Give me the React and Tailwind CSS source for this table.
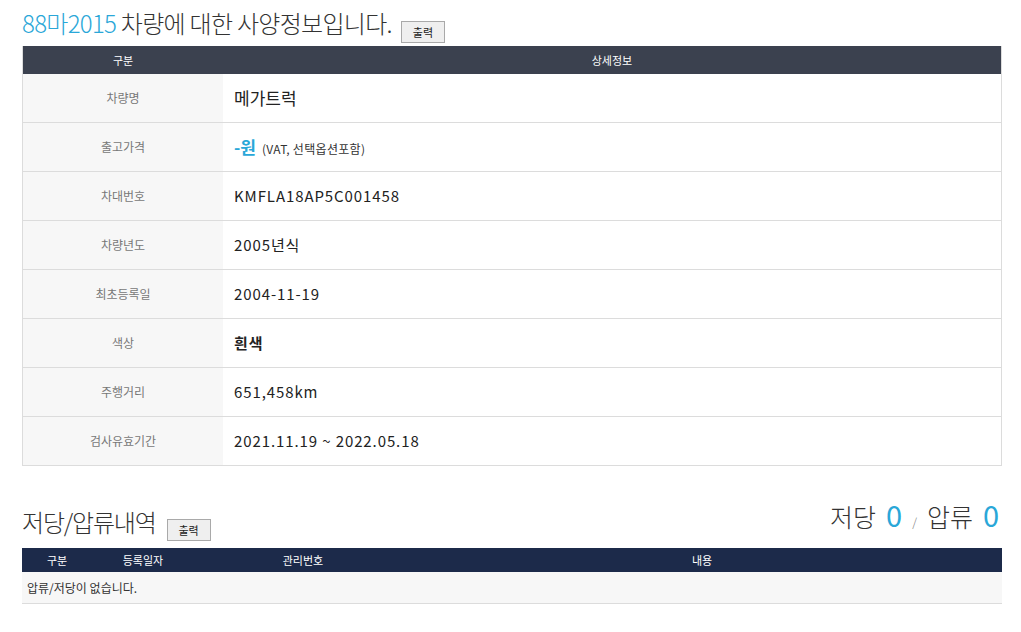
import React from "react";

const rows = [
  { label: "차량명", value: <span className="text-[17px] tracking-normal">메가트럭</span> },
  {
    label: "출고가격",
    value: (
      <span className="flex items-baseline tracking-normal">
        <span className="text-[17px] text-[#2aa7d8] font-bold">-원</span>
        <span className="ml-[6px] text-[12px] text-[#333] tracking-[0.3px]">(VAT, 선택옵션포함)</span>
      </span>
    ),
  },
  { label: "차대번호", value: "KMFLA18AP5C001458" },
  { label: "차량년도", value: "2005년식" },
  { label: "최초등록일", value: "2004-11-19" },
  { label: "색상", value: <span className="font-bold">흰색</span> },
  { label: "주행거리", value: "651,458km" },
  { label: "검사유효기간", value: "2021.11.19 ~ 2022.05.18" },
];

function PrintButton() {
  return (
    <button className="h-[22px] w-[44px] border border-[#a9a9a9] bg-[#efefef] text-[11px] text-[#222] leading-none">
      출력
    </button>
  );
}

export default function App() {
  return (
    <div
      className="w-[1021px] h-[632px] bg-white text-[#333] overflow-hidden"
      style={{ fontFamily: '"Noto Sans CJK KR", "Noto Sans", sans-serif' }}
    >
      <div className="pl-[22px] pr-[19px] pt-[5px]">
        <div className="flex items-end h-[36px]">
          <h1 className="text-[24px] font-light tracking-[-0.7px] leading-[36px] text-[#333]">
            <span className="text-[#2aa7d8]">88마2015</span> 차량에 대한 사양정보입니다.
          </h1>
          <div className="ml-[9px] mb-[-2px]">
            <PrintButton />
          </div>
        </div>

        <div className="mt-[5px] border-l border-r border-[#dcdcdc]">
          <div className="flex h-[28px] bg-[#3b414f] text-white text-[11px] items-center">
            <div className="w-[200px] text-center">구분</div>
            <div className="flex-1 text-center">상세정보</div>
          </div>
          {rows.map((r) => (
            <div key={r.label} className="flex h-[49px] border-b border-[#dcdcdc]">
              <div className="w-[200px] bg-[#f7f7f7] flex items-center justify-center text-[12px] text-[#777]">
                {r.label}
              </div>
              <div className="flex-1 flex items-center pl-[11px] text-[15px] text-[#222] tracking-[0.9px]">
                {r.value}
              </div>
            </div>
          ))}
        </div>

        <div className="mt-[34px] flex items-end justify-between h-[40px]">
          <div className="flex items-end">
            <h2 className="text-[24px] font-light tracking-[-1.2px] leading-[36px] text-[#333]">
              저당/압류내역
            </h2>
            <div className="ml-[11px] mb-[-1px]">
              <PrintButton />
            </div>
          </div>
          <div className="flex items-baseline text-[25px] font-light leading-[36px] text-[#333] pr-[3px]">
            <span>저당</span>
            <span className="ml-[10px] text-[29px] text-[#2aa7d8] font-normal">0</span>
            <span className="mx-[10px] text-[12px] text-[#777]">/</span>
            <span>압류</span>
            <span className="ml-[10px] text-[29px] text-[#2aa7d8] font-normal">0</span>
          </div>
        </div>

        <div className="mt-[8px]">
          <div className="grid grid-cols-[70px_102px_218px_1fr] h-[24px] bg-[#1c2a4a] text-white text-[11px] items-center">
            <div className="text-center">구분</div>
            <div className="text-center">등록일자</div>
            <div className="text-center">관리번호</div>
            <div className="text-center pr-[10px]">내용</div>
          </div>
          <div className="h-[32px] bg-[#f7f7f7] border-b border-[#dcdcdc] flex items-center pl-[5px] text-[12px] text-[#333]">
            압류/저당이 없습니다.
          </div>
        </div>
      </div>
    </div>
  );
}
